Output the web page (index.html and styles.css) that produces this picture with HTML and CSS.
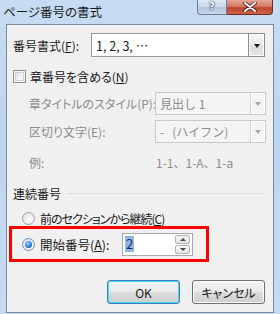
FILE: index.html
```html
<!DOCTYPE html>
<html lang="ja">
<head>
    <meta charset="UTF-8">
    <title>ページ番号の書式</title>
    <link rel="stylesheet" href="styles.css">
</head>
<body>
    <div class="window">
        <div class="titlebar">
            <span class="title">ページ番号の書式</span>
            <div class="caption-buttons">
                <div class="cap-help">?</div>
                <div class="cap-close">
                    <svg width="14" height="10" viewBox="0 0 14 10">
                        <path d="M2 1 L12 9 M12 1 L2 9" stroke="#4a2020" stroke-width="3.6" stroke-linecap="round"/>
                        <path d="M2 1 L12 9 M12 1 L2 9" stroke="#ffffff" stroke-width="2" stroke-linecap="round"/>
                    </svg>
                </div>
            </div>
        </div>
        <div class="client">
            <div class="row row-format">
                <span class="label label-format">番号書式(<u>F</u>):</span>
                <div class="combo combo-format">
                    <span class="combo-text">1, 2, 3, …</span>
                    <span class="combo-arrow"><i></i></span>
                </div>
            </div>

            <div class="check-row">
                <span class="checkbox"></span>
                <span class="label">章番号を含める(<u>N</u>)</span>
            </div>

            <div class="chapter">
                <div class="row row-sub">
                    <span class="label label-sub disabled">章タイトルのスタイル(P):</span>
                    <div class="combo combo-sub disabled">
                        <span class="combo-text">見出し 1</span>
                        <span class="combo-arrow"><i></i></span>
                    </div>
                </div>
                <div class="row row-sub second">
                    <span class="label label-sub disabled">区切り文字(E):</span>
                    <div class="combo combo-sub disabled">
                        <span class="combo-text">-&nbsp;&nbsp;&nbsp;(ハイフン)</span>
                        <span class="combo-arrow"><i></i></span>
                    </div>
                </div>
                <div class="example-row">
                    <span class="label label-sub disabled">例:</span>
                    <span class="example disabled">1-1、1-A、1-a</span>
                </div>
            </div>

            <div class="group-head">
                <span class="label">連続番号</span>
                <span class="group-line"></span>
            </div>

            <div class="radio-row">
                <span class="radio"></span>
                <span class="label label-continue">前のセクションから継続(<u>C</u>)</span>
            </div>

            <div class="highlight">
                <div class="radio-row inner">
                    <span class="radio checked"><i></i></span>
                    <span class="label label-start">開始番号(<u>A</u>):</span>
                    <div class="spin">
                        <span class="spin-value"><span class="selected">2</span></span>
                        <span class="spin-buttons">
                            <span class="spin-btn up"><i></i></span>
                            <span class="spin-btn down"><i></i></span>
                        </span>
                    </div>
                </div>
            </div>

            <div class="buttons">
                <button class="btn default">OK</button>
                <button class="btn">キャンセル</button>
            </div>
        </div>
    </div>
</body>
</html>
```

FILE: styles.css
```css
body {
    margin: 0;
    padding: 0;
    width: 280px;
    height: 314px;
    overflow: hidden;
    font-family: "Noto Sans CJK JP", sans-serif;
    font-feature-settings: "palt";
    font-size: 12px;
    color: #1a1a1a;
}

.window {
    width: 280px;
    height: 314px;
    background: linear-gradient(to bottom, #c6dcf2 0%, #bcd5ee 40%, #c3daf1 100%);
    box-sizing: border-box;
}

.titlebar {
    height: 24px;
    display: flex;
    align-items: flex-start;
    justify-content: space-between;
}

.title {
    margin-left: 3px;
    line-height: 24px;
    font-size: 12.5px;
    color: #1b1b1b;
}

.caption-buttons {
    display: flex;
    margin-right: 7px;
}

.cap-help {
    width: 28px;
    height: 14px;
    border: 1px solid #6d7f96;
    border-top: none;
    border-radius: 0 0 0 4px;
    background: linear-gradient(to bottom, #e0eaf5 0%, #c5d5e8 50%, #b2c4da 51%, #c8d8ec 100%);
    display: flex;
    align-items: center;
    justify-content: center;
    color: #ffffff;
    font-family: "DejaVu Sans", sans-serif;
    font-size: 10px;
    font-weight: bold;
    line-height: 12px;
    text-shadow: 0 0 1px #2c3e56, 0 0 1px #2c3e56, 0 0 2px #2c3e56;
}

.cap-close {
    width: 45px;
    height: 14px;
    border: 1px solid #6e2b25;
    border-top: none;
    border-left: none;
    border-radius: 0 0 4px 0;
    background: linear-gradient(to bottom, #e8a596 0%, #d27a68 45%, #c0452f 55%, #d0624a 100%);
    display: flex;
    align-items: center;
    justify-content: center;
}

.client {
    margin: 0 6px;
    height: 289px;
    box-sizing: border-box;
    border: 1px solid #7c8a99;
    background: #f0f0f0;
    padding: 8px 7px 0 6px;
}

.label {
    white-space: nowrap;
}

.disabled {
    color: #8c8c8c;
}

.row {
    display: flex;
    align-items: center;
}

.row-format {
    height: 24px;
}

.label-format {
    width: 78px;
}

.combo {
    display: flex;
    align-items: stretch;
    box-sizing: border-box;
    border: 1px solid #a8a8a8;
    background: #ffffff;
}

.combo-format {
    width: 174px;
    height: 24px;
    border-color: #9a9a9a;
}

.combo-text {
    flex: 1;
    padding-left: 4px;
    display: flex;
    align-items: center;
    white-space: nowrap;
}

.combo-format .combo-text {
    font-size: 12.5px;
}

.combo-sub .combo-text {
    font-feature-settings: normal;
}

.combo-arrow {
    width: 15px;
    box-sizing: border-box;
    border-left: 1px solid #b5b5b5;
    background: linear-gradient(to bottom, #f6f6f6 0%, #e9e9e9 50%, #dcdcdc 51%, #e6e6e6 100%);
    display: flex;
    align-items: center;
    justify-content: center;
    box-shadow: inset 0 0 0 1px #ffffff;
}

.combo-format .combo-arrow {
    border: 1px solid #8c8c8c;
    margin: -1px -1px -1px 0;
    width: 17px;
}

.combo-arrow i {
    width: 0;
    height: 0;
    border-left: 3.5px solid transparent;
    border-right: 3.5px solid transparent;
    border-top: 4px solid #1a1a1a;
    margin-top: 1px;
}

.combo.disabled {
    border-color: #c9c9c9;
    background: #f4f4f4;
}

.combo.disabled .combo-arrow {
    background: #f4f4f4;
    border-left-color: #d6d6d6;
}

.combo.disabled .combo-arrow i {
    border-top-color: #a6a6a6;
}

.check-row {
    display: flex;
    align-items: center;
    height: 13px;
    margin-top: 13px;
}

.checkbox {
    width: 13px;
    height: 13px;
    box-sizing: border-box;
    border: 1px solid #8e8f8f;
    background: linear-gradient(135deg, #dcdcdc 0%, #f4f4f4 60%, #ffffff 100%);
    box-shadow: inset 0 0 0 1px #f6f6f6, inset 0 0 0 2px #d2d2d2;
    margin-right: 4px;
}

.chapter {
    margin-left: 16px;
}

.row-sub {
    height: 23px;
    margin-top: 9px;
}

.row-sub.second {
    margin-top: 5px;
}

.label-sub {
    width: 126px;
}

.combo-sub {
    width: 111px;
    height: 23px;
}

.example-row {
    display: flex;
    align-items: center;
    height: 14px;
    margin-top: 12px;
}

.example {
    padding-left: 1px;
    font-feature-settings: normal;
}

.group-head {
    display: flex;
    align-items: center;
    height: 15px;
    margin-top: 17px;
}

.group-line {
    flex: 1;
    height: 1px;
    margin-left: 6px;
    margin-right: 1px;
    background: #d9dee3;
}

.radio-row {
    display: flex;
    align-items: center;
    height: 13px;
    margin-top: 11px;
    padding-left: 9px;
}

.label-continue {
    letter-spacing: -1px;
}

.radio {
    width: 13px;
    height: 13px;
    box-sizing: border-box;
    border-radius: 50%;
    border: 1px solid #a0a0a0;
    background: radial-gradient(circle at 60% 60%, #ffffff 0%, #e6e6e6 70%, #d6d6d6 100%);
    margin-right: 5px;
    display: flex;
    align-items: center;
    justify-content: center;
}

.radio.checked {
    border-color: #6b8fb3;
}

.radio.checked i {
    width: 7px;
    height: 7px;
    border-radius: 50%;
    background: radial-gradient(circle at 40% 35%, #9fd6ff 0%, #2d7ed6 55%, #0f3f8a 100%);
}

.highlight {
    margin-top: 1px;
    margin-left: -4px;
    width: 200px;
    height: 36px;
    box-sizing: border-box;
    border: 3px solid #ff0000;
    display: flex;
    align-items: center;
}

.radio-row.inner {
    margin-top: 0;
    height: 30px;
    padding-left: 10px;
}

.label-start {
    width: 82px;
    font-size: 12.5px;
}

.spin {
    display: flex;
    width: 71px;
    height: 23px;
    box-sizing: border-box;
    border: 1px solid #a9a9a9;
    background: #ffffff;
}

.spin-value {
    flex: 1;
    display: flex;
    align-items: center;
    padding-left: 2px;
}

.selected {
    background: #8fb5e2;
    color: #15306a;
    font-size: 13px;
    line-height: 16px;
    padding: 0 1px;
}

.spin-buttons {
    display: flex;
    flex-direction: column;
    justify-content: center;
    gap: 1px;
    padding: 1px 2px 1px 0;
}

.spin-btn {
    width: 15px;
    height: 9px;
    box-sizing: border-box;
    border: 1px solid #b3b3b3;
    border-radius: 2px;
    background: linear-gradient(to bottom, #f7f7f7 0%, #e4e4e4 100%);
    display: flex;
    align-items: center;
    justify-content: center;
}

.spin-btn i {
    width: 0;
    height: 0;
    border-left: 3px solid transparent;
    border-right: 3px solid transparent;
}

.spin-btn.up i {
    border-bottom: 3px solid #3a4a5e;
}

.spin-btn.down i {
    border-top: 3px solid #3a4a5e;
}

.buttons {
    display: flex;
    justify-content: flex-end;
    gap: 12px;
    margin-top: 18px;
    padding-right: 1px;
}

.btn {
    width: 73px;
    height: 24px;
    padding: 0;
    border: 1px solid #707070;
    border-radius: 3px;
    background: linear-gradient(to bottom, #f2f2f2 0%, #ebebeb 50%, #dddddd 51%, #cfcfcf 100%);
    box-shadow: inset 0 0 0 1px #fbfbfb;
    font-family: "Noto Sans CJK JP", sans-serif;
    font-feature-settings: "palt";
    font-size: 12px;
    color: #1a1a1a;
}

.btn.default {
    border-color: #3c7fb1;
    box-shadow: inset 0 0 0 1px #48d8f8;
}
```
